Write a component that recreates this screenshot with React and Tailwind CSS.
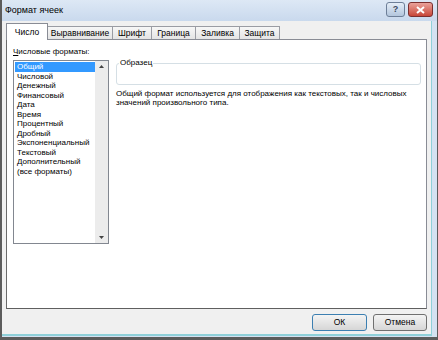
import React from 'react';

const font = { fontFamily: '"Liberation Sans", Arial, sans-serif' };

const tabs = [
  { label: 'Число', w: 'w-[42px]', active: true },
  { label: 'Выравнивание', w: 'w-[66px]' },
  { label: 'Шрифт', w: 'w-[40px]' },
  { label: 'Граница', w: 'w-[45px]' },
  { label: 'Заливка', w: 'w-[45px]' },
  { label: 'Защита', w: 'w-[41px]' }
];

const formats = [
  'Общий',
  'Числовой',
  'Денежный',
  'Финансовый',
  'Дата',
  'Время',
  'Процентный',
  'Дробный',
  'Экспоненциальный',
  'Текстовый',
  'Дополнительный',
  '(все форматы)'
];

// title bar with help and close buttons
const TitleBar = () => (
  <div className="h-[21px] flex items-start bg-linear-to-b from-[#dde8f5] to-[#c9d9ed]">
    <span className="pl-[3px] pt-[5px] text-[9px] leading-[10px] text-black">Формат ячеек</span>
    <div className="ml-auto mr-[4px] flex gap-[3px] pt-[2px]">
      <div className="w-[19px] h-[15px] rounded-[3px] border border-[#6d7f98] bg-linear-to-b from-[#e4edf7] to-[#b3c6dd] flex items-center justify-center">
        <span className="text-[9px] leading-none font-bold text-[#3b4a60]">?</span>
      </div>
      <div className="w-[25px] h-[15px] rounded-[3px] border border-[#7a2f2f] bg-linear-to-b from-[#e9a19a] to-[#c74538] flex items-center justify-center">
        <svg width="9" height="8" viewBox="0 0 9 8">
          <path d="M1 1 L8 7 M8 1 L1 7" stroke="#ffffff" strokeWidth="2" />
        </svg>
      </div>
    </div>
  </div>
);

const Tabs = () => (
  <div className="flex items-end h-[16px] pl-[4px]">
    {tabs.map((t) =>
      t.active ? (
        <div
          key={t.label}
          className={`${t.w} h-[17px] -mb-px relative z-10 bg-white border border-b-0 border-[#898c95] flex items-center justify-center text-[8.5px] text-black`}
        >
          {t.label}
        </div>
      ) : (
        <div
          key={t.label}
          className={`${t.w} h-[13px] -ml-px bg-linear-to-b from-[#f7f7f7] to-[#e4e4e4] border border-b-0 border-[#9a9ca3] flex items-center justify-center text-[8.5px] text-black`}
        >
          {t.label}
        </div>
      )
    )}
  </div>
);

const FormatList = () => (
  <div className="w-[96px] h-[184px] border border-[#828790] bg-white flex">
    <div className="flex-1 pt-px pl-px">
      {formats.map((f, i) => (
        <div
          key={f}
          className={`h-[9.5px] pl-[2px] text-[8px] leading-[9.5px] whitespace-nowrap ${
            i === 0 ? 'bg-[#3399ff] text-white' : 'text-black'
          }`}
        >
          {f}
        </div>
      ))}
    </div>
    <div className="w-[13px] bg-[#ececec] flex flex-col items-center justify-between py-[4px]">
      <svg width="5" height="3" viewBox="0 0 5 3">
        <path d="M0 3 L2.5 0 L5 3 Z" fill="#444" />
      </svg>
      <svg width="5" height="3" viewBox="0 0 5 3">
        <path d="M0 0 L5 0 L2.5 3 Z" fill="#444" />
      </svg>
    </div>
  </div>
);

export default function App() {
  return (
    <div
      className="w-[438px] h-[340px] flex flex-col bg-[#d4e2f1] border-l-2 border-r border-b-[3px] border-[#5c5c5c]"
      style={font}
    >
      <TitleBar />
      <div className="flex-1 mr-[5px] mb-[1px] pt-[2px] bg-[#f0f0f0] border-r border-b-2 border-[#8fd0d9] flex flex-col">
        <Tabs />
        <div className="mx-[4px] h-[270px] bg-white border border-[#898c95] border-l-[#6a6a6a] border-b-[#5f5f5f] flex pl-[6px] pt-[7px] pr-[5px]">
          <div className="flex flex-col">
            <div className="text-[8px] leading-[10px] text-black h-[13px]">
              <span className="underline">Ч</span>исловые форматы:
            </div>
            <FormatList />
          </div>
          <div className="flex-1 ml-[7px] pt-[11px]">
            <fieldset className="h-[27px] border border-[#d5dfe5] rounded-[3px] px-[2px]">
              <legend className="px-[1px] text-[8px] leading-[10px] text-black">Образец</legend>
            </fieldset>
            <p className="mt-[4px] text-[8px] leading-[9px] text-black">
              Общий формат используется для отображения как текстовых, так и числовых значений произвольного типа.
            </p>
          </div>
        </div>
        <div className="flex justify-end gap-[6px] pr-[4px] pt-[5px]">
          <button className="w-[55px] h-[17px] rounded-[3px] border border-[#3c7fb1] bg-linear-to-b from-[#f4f4f4] to-[#d6d6d6] text-[8.5px] text-black">
            ОК
          </button>
          <button className="w-[54px] h-[17px] rounded-[3px] border border-[#707070] bg-linear-to-b from-[#f4f4f4] to-[#d6d6d6] text-[8.5px] text-black">
            Отмена
          </button>
        </div>
      </div>
    </div>
  );
}
